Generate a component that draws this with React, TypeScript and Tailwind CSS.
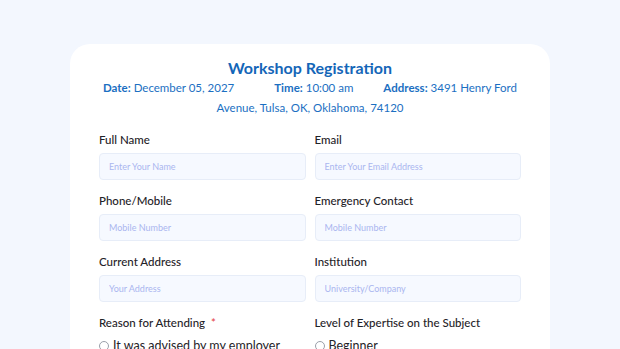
import React from 'react';

function Field({ label, placeholder }: { label: string; placeholder: string }) {
  return (
    <div className="flex flex-col">
      <label className="h-[17px] text-[11.5px] leading-[17px] font-medium text-[#1f2328]">{label}</label>
      <input
        readOnly
        placeholder={placeholder}
        className="mt-[5px] h-[27px] w-full rounded-[4px] border border-[#e7edf8] bg-[#f6f9ff] px-[9px] text-[9px] outline-none placeholder:text-[#aab6ef]"
      />
    </div>
  );
}

function Radio({ label }: { label: string }) {
  return (
    <label className="flex items-center gap-[4px] text-[12.5px] leading-[16px] text-[#1f2328]">
      <span className="h-[10px] w-[10px] rounded-full border border-[#9aa0aa] bg-white" />
      {label}
    </label>
  );
}

export default function App() {
  return (
    <div
      className="h-[349px] w-[620px] overflow-hidden bg-[#f3f7fe] px-[70px] pt-[44px]"
      style={{ fontFamily: 'Lato, "Noto Sans", sans-serif' }}
    >
      <div className="h-[340px] rounded-[20px] bg-white px-[29px] pt-[13px]">
        <h1 className="text-center text-[16px] leading-[22px] font-bold text-[#1466b8]">Workshop Registration</h1>
        <div className="mt-[1px] flex justify-between px-[4px] text-[11.5px] leading-[16px] whitespace-nowrap text-[#1b6fc2]">
          <span>
            <b className="font-bold">Date:</b> December 05, 2027
          </span>
          <span className="ml-[10px]">
            <b className="font-bold">Time:</b> 10:00 am
          </span>
          <span>
            <b className="font-bold">Address:</b> 3491 Henry Ford
          </span>
        </div>
        <div className="mt-[4px] text-center text-[11.5px] leading-[16px] text-[#1b6fc2]">
          Avenue, Tulsa, OK, Oklahoma, 74120
        </div>

        <div className="mt-[15px] grid grid-cols-2 gap-x-[9px] gap-y-[12px]">
          <Field label="Full Name" placeholder="Enter Your Name" />
          <Field label="Email" placeholder="Enter Your Email Address" />
          <Field label="Phone/Mobile" placeholder="Mobile Number" />
          <Field label="Emergency Contact" placeholder="Mobile Number" />
          <Field label="Current Address" placeholder="Your Address" />
          <Field label="Institution" placeholder="University/Company" />
          <div className="flex flex-col">
            <div className="h-[17px] text-[11.5px] leading-[17px] font-medium text-[#1f2328]">
              Reason for Attending <span className="ml-[3px] text-[#e5484d]">*</span>
            </div>
            <div className="mt-[7px]">
              <Radio label="It was advised by my employer" />
            </div>
          </div>
          <div className="flex flex-col">
            <div className="h-[17px] text-[11.5px] leading-[17px] font-medium text-[#1f2328]">
              Level of Expertise on the Subject
            </div>
            <div className="mt-[7px]">
              <Radio label="Beginner" />
            </div>
          </div>
        </div>
      </div>
    </div>
  );
}
